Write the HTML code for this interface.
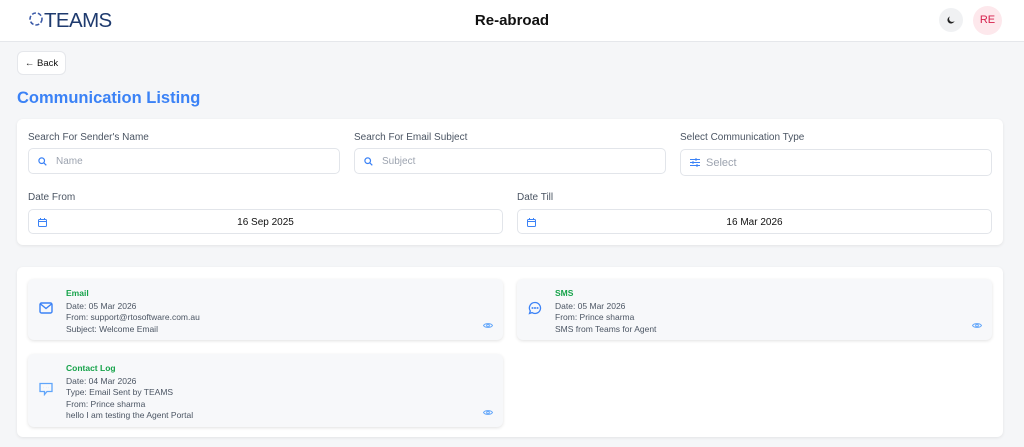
<!DOCTYPE html>
<html><head><style>
*{box-sizing:border-box;margin:0;padding:0}
body{width:1024px;height:447px;overflow:hidden;background:#f5f6f8;font-family:"Liberation Sans",sans-serif;position:relative;color:#111}
.abs{position:absolute}
.hdr{left:0;top:0;width:1024px;height:42px;background:#fff;border-bottom:1px solid #e5e7eb}
.card{background:#fff;border-radius:6px;box-shadow:0 1px 3px rgba(0,0,0,.08)}
.lbl{font-size:10px;color:#4b5563}
.inp{background:#fff;border:1px solid #e2e5ea;border-radius:5px;font-size:10px;color:#9ca3af;display:flex;align-items:center}
.item{background:#f7f8fa;border-radius:6px;box-shadow:0 1px 3px rgba(0,0,0,.12)}
.item .t{position:absolute;left:38px;top:9px;font-size:8.5px;font-weight:bold;color:#16a34a}
.item .l{position:absolute;left:38px;font-size:8.5px;color:#4b5563;line-height:11.3px}
.eye{position:absolute;right:10px}
</style></head><body>
<div class="abs hdr">
 <svg class="abs" style="left:28px;top:11px" width="16" height="16" viewBox="0 0 16 16" fill="none" stroke="#3b5aa8" stroke-width="1.6" stroke-dasharray="4 2"><circle cx="8" cy="8" r="6"/></svg>
 <div class="abs" style="left:44px;top:9px;font-size:20.5px;color:#1e3a6e;letter-spacing:-0.6px">TEAMS</div>
 <div class="abs" style="left:0;width:1024px;top:12px;text-align:center;font-size:15px;font-weight:bold">Re-abroad</div>
 <div class="abs" style="left:939px;top:8px;width:24px;height:24px;border-radius:50%;background:#f0f1f3"><svg class="abs" style="left:8px;top:8px" width="8" height="8" viewBox="0 0 8 8"><path d="M3 0.5A3.6 3.6 0 1 0 7.5 5 3 3 0 0 1 3 0.5z" fill="#222"/></svg></div>
 <div class="abs" style="left:973px;top:6px;width:29px;height:29px;border-radius:50%;background:#fde8ec;color:#d6204c;text-align:center;font-size:11px;line-height:29px">RE</div>
</div>
<div class="abs card" style="left:17px;top:51px;width:49px;height:24px;border:1px solid #e5e7eb;font-size:9.5px;line-height:23px;text-align:center;box-shadow:none">← Back</div>
<div class="abs" style="left:17px;top:89px;font-size:16.5px;font-weight:bold;color:#3b82f6">Communication Listing</div>
<div class="abs card" style="left:17px;top:119px;width:986px;height:126px"></div>
<div class="abs lbl" style="left:28px;top:132px">Search For Sender's Name</div>
<div class="abs lbl" style="left:354px;top:132px">Search For Email Subject</div>
<div class="abs lbl" style="left:680px;top:132px">Select Communication Type</div>
<div class="abs inp" style="left:28px;top:148px;width:312px;height:26px;padding-left:9px"><svg width="9" height="9" viewBox="0 0 9 9" fill="none" stroke="#3b82f6" stroke-width="1.2" style="margin-right:9px"><circle cx="3.7" cy="3.7" r="2.8"/><path d="M5.8 5.8L8.3 8.3"/></svg>Name</div>
<div class="abs inp" style="left:354px;top:148px;width:312px;height:26px;padding-left:9px"><svg width="9" height="9" viewBox="0 0 9 9" fill="none" stroke="#3b82f6" stroke-width="1.2" style="margin-right:9px"><circle cx="3.7" cy="3.7" r="2.8"/><path d="M5.8 5.8L8.3 8.3"/></svg>Subject</div>
<div class="abs inp" style="left:680px;top:149px;width:312px;height:27px;padding-left:9px;font-size:11px"><svg width="10" height="9" viewBox="0 0 10 9" fill="none" stroke="#3b82f6" stroke-width="1" style="margin-right:6px"><path d="M0 1.5h10M0 4.5h10M0 7.5h10M6 0v3M3 3v3M7 6v3"/></svg>Select</div>
<div class="abs lbl" style="left:28px;top:192px">Date From</div>
<div class="abs lbl" style="left:517px;top:192px">Date Till</div>
<div class="abs inp" style="left:28px;top:209px;width:475px;height:25px;color:#111;justify-content:center;padding-top:1px"><svg class="abs" style="left:9px;top:8px" width="9" height="9" viewBox="0 0 9 9" fill="none" stroke="#3b82f6" stroke-width="1"><rect x=".5" y="1.5" width="8" height="7" rx="1"/><path d="M.5 3.5h8M2.5 0v2M6.5 0v2"/></svg>16 Sep 2025</div>
<div class="abs inp" style="left:517px;top:209px;width:475px;height:25px;color:#111;justify-content:center;padding-top:1px"><svg class="abs" style="left:9px;top:8px" width="9" height="9" viewBox="0 0 9 9" fill="none" stroke="#3b82f6" stroke-width="1"><rect x=".5" y="1.5" width="8" height="7" rx="1"/><path d="M.5 3.5h8M2.5 0v2M6.5 0v2"/></svg>16 Mar 2026</div>
<div class="abs card" style="left:17px;top:267px;width:986px;height:170px"></div>
<div class="abs item" style="left:28px;top:279px;width:475px;height:61px">
 <svg class="abs" style="left:11px;top:23px" width="14" height="12" viewBox="0 0 14 12" fill="none" stroke="#3b82f6" stroke-width="1.4"><rect x="1" y="1" width="12" height="10" rx="1.5"/><path d="M1.5 2l5.5 4.5 5.5-4.5"/></svg>
 <div class="t">Email</div>
 <div class="l" style="top:22px">Date: 05 Mar 2026<br>From: support@rtosoftware.com.au<br>Subject: Welcome Email</div>
 <svg class="eye" style="top:43px" width="10" height="7" viewBox="0 0 10 7" fill="none" stroke="#60a5fa" stroke-width="1"><path d="M.5 3.5C2 1 8 1 9.5 3.5 8 6 2 6 .5 3.5z"/><circle cx="5" cy="3.5" r="1.3"/></svg>
</div>
<div class="abs item" style="left:517px;top:279px;width:475px;height:61px">
 <svg class="abs" style="left:11px;top:22px" width="14" height="14" viewBox="0 0 14 14" fill="none" stroke="#3b82f6" stroke-width="1.3"><path d="M7 1.5a5.5 5.5 0 1 1-3 10.1L1.5 12.5l.8-2.5A5.5 5.5 0 0 1 7 1.5z"/><circle cx="4.5" cy="7" r=".4"/><circle cx="7" cy="7" r=".4"/><circle cx="9.5" cy="7" r=".4"/></svg>
 <div class="t">SMS</div>
 <div class="l" style="top:22px">Date: 05 Mar 2026<br>From: Prince sharma<br>SMS from Teams for Agent</div>
 <svg class="eye" style="top:43px" width="10" height="7" viewBox="0 0 10 7" fill="none" stroke="#60a5fa" stroke-width="1"><path d="M.5 3.5C2 1 8 1 9.5 3.5 8 6 2 6 .5 3.5z"/><circle cx="5" cy="3.5" r="1.3"/></svg>
</div>
<div class="abs item" style="left:28px;top:354px;width:475px;height:73px">
 <svg class="abs" style="left:11px;top:28px" width="14" height="14" viewBox="0 0 14 14" fill="none" stroke="#60a5fa" stroke-width="1.3"><path d="M1 1.5h12v8H8l-2.5 3v-3H1z"/><path d="M4.5 5.5h.1M7 5.5h.1M9.5 5.5h.1"/></svg>
 <div class="t">Contact Log</div>
 <div class="l" style="top:22px">Date: 04 Mar 2026<br>Type: Email Sent by TEAMS<br>From: Prince sharma<br>hello I am testing the Agent Portal</div>
 <svg class="eye" style="top:55px" width="10" height="7" viewBox="0 0 10 7" fill="none" stroke="#60a5fa" stroke-width="1"><path d="M.5 3.5C2 1 8 1 9.5 3.5 8 6 2 6 .5 3.5z"/><circle cx="5" cy="3.5" r="1.3"/></svg>
</div>
</body></html>
